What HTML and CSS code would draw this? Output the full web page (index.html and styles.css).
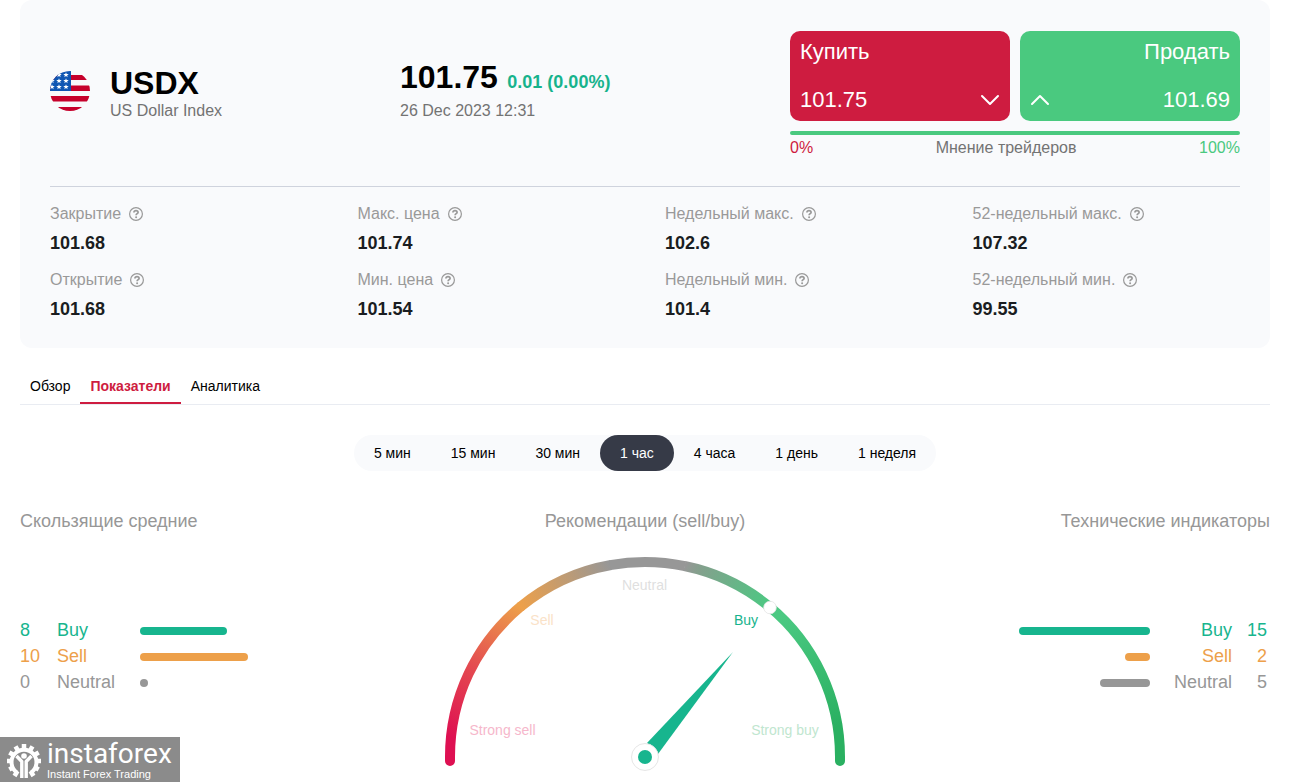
FILE: index.html
```html
<!DOCTYPE html>
<html lang="ru">
<head>
<meta charset="utf-8">
<meta name="viewport" content="width=device-width, initial-scale=1">
<title>USDX – US Dollar Index</title>
<link rel="stylesheet" href="styles.css">
</head>
<body>
<svg class="defs" width="0" height="0" aria-hidden="true">
  <symbol id="help" viewBox="0 0 14 14">
    <circle cx="7" cy="7" r="6.4" fill="none" stroke="currentColor" stroke-width="1.2"/>
    <path d="M4.900 5.500C5 4.200 5.800 3.700 7 3.700s2.100.6 2.100 1.700C9.100 6.700 7.100 6.700 7.100 8.300" fill="none" stroke="currentColor" stroke-width="1.700"/>
    <circle cx="7.100" cy="10.200" r="1" fill="currentColor"/>
  </symbol>
</svg>
<main class="page">
  <section class="card">
    <header class="summary">
      <div class="instrument">
        <svg class="flag" viewBox="0 0 40 40" aria-hidden="true">
          <defs>
            <clipPath id="disc"><circle cx="20" cy="20" r="20"/></clipPath>
            <path id="star" d="M0-2.800.7-.9 2.700-.9 1.100.4 1.700 2.300 0 1.100-1.700 2.300-1.100.4-2.700-.9-.7-.9Z" fill="#fff"/>
          </defs>
          <g clip-path="url(#disc)">
            <path fill="#f8f8fa" d="M0 0h40v40H0z"/>
            <path fill="#c6002b" d="M0 4h40v5H0zM0 14.500h40v5.500H0zM0 25h40v5.500H0zM0 36h40v4H0z"/>
            <path fill="#0f56b3" d="M0 0h21v20H0z"/>
            <use href="#star" x="9" y="4"/><use href="#star" x="16" y="4"/>
            <use href="#star" x="2" y="10"/><use href="#star" x="9" y="10"/><use href="#star" x="16" y="10"/>
            <use href="#star" x="2" y="16"/><use href="#star" x="9" y="16"/><use href="#star" x="16" y="16"/>
          </g>
        </svg>
        <div>
          <h1 class="ticker">USDX</h1>
          <p class="note">US Dollar Index</p>
        </div>
      </div>
      <div class="quote">
        <p class="price-line"><span class="price">101.75</span> <span class="change">0.01 (0.00%)</span></p>
        <p class="note">26 Dec 2023 12:31</p>
      </div>
      <div class="trade">
        <div class="trade-buttons">
          <button class="deal deal-buy" type="button">
            <span class="deal-row">Купить</span>
            <span class="deal-row">101.75
              <svg class="chevron" viewBox="0 0 20 12" aria-hidden="true"><path d="M2 2l8 8 8-8"/></svg>
            </span>
          </button>
          <button class="deal deal-sell" type="button">
            <span class="deal-row">Продать</span>
            <span class="deal-row">
              <svg class="chevron" viewBox="0 0 20 12" aria-hidden="true"><path d="M2 10l8-8 8 8"/></svg>
              101.69</span>
          </button>
        </div>
        <div class="opinion-bar"></div>
        <div class="opinion"><span class="opinion-low">0%</span><span>Мнение трейдеров</span><span class="opinion-high">100%</span></div>
      </div>
    </header>
    <dl class="stats">
      <div><dt>Закрытие <svg class="help"><use href="#help"/></svg></dt><dd>101.68</dd></div>
      <div><dt>Макс. цена <svg class="help"><use href="#help"/></svg></dt><dd>101.74</dd></div>
      <div><dt>Недельный макс. <svg class="help"><use href="#help"/></svg></dt><dd>102.6</dd></div>
      <div><dt>52-недельный макс. <svg class="help"><use href="#help"/></svg></dt><dd>107.32</dd></div>
      <div><dt>Открытие <svg class="help"><use href="#help"/></svg></dt><dd>101.68</dd></div>
      <div><dt>Мин. цена <svg class="help"><use href="#help"/></svg></dt><dd>101.54</dd></div>
      <div><dt>Недельный мин. <svg class="help"><use href="#help"/></svg></dt><dd>101.4</dd></div>
      <div><dt>52-недельный мин. <svg class="help"><use href="#help"/></svg></dt><dd>99.55</dd></div>
    </dl>
  </section>

  <nav class="tabs">
    <a class="tab" href="#overview">Обзор</a>
    <a class="tab tab-active" href="#indicators">Показатели</a>
    <a class="tab" href="#analytics">Аналитика</a>
  </nav>

  <div class="periods">
    <button class="period" type="button">5 мин</button>
    <button class="period" type="button">15 мин</button>
    <button class="period" type="button">30 мин</button>
    <button class="period period-active" type="button">1 час</button>
    <button class="period" type="button">4 часа</button>
    <button class="period" type="button">1 день</button>
    <button class="period" type="button">1 неделя</button>
  </div>

  <section class="signals" id="indicators">
    <div>
      <h2 class="heading">Скользящие средние</h2>
      <ul class="tally">
        <li class="tally-row buy"><span>8</span><span>Buy</span><span class="bar" style="width:87px"></span></li>
        <li class="tally-row sell"><span>10</span><span>Sell</span><span class="bar" style="width:108px"></span></li>
        <li class="tally-row neutral"><span>0</span><span>Neutral</span><span class="bar" style="width:8px"></span></li>
      </ul>
    </div>
    <div class="recommendation">
      <h2 class="heading">Рекомендации (sell/buy)</h2>
      <svg class="gauge" viewBox="0 0 400 216" role="img" aria-label="Buy">
        <defs>
          <linearGradient id="g1" gradientUnits="userSpaceOnUse" x1="5" y1="180" x2="76" y2="50">
            <stop offset="0" stop-color="#de1052"/><stop offset=".5" stop-color="#e44c50"/><stop offset="1" stop-color="#eda04a"/>
          </linearGradient>
          <linearGradient id="g2" gradientUnits="userSpaceOnUse" x1="76" y1="50" x2="165" y2="8">
            <stop offset="0" stop-color="#eda04a"/><stop offset="1" stop-color="#979797"/>
          </linearGradient>
          <linearGradient id="g3" gradientUnits="userSpaceOnUse" x1="240" y1="9" x2="325" y2="50">
            <stop offset="0" stop-color="#979797"/><stop offset=".15" stop-color="#84a08d"/><stop offset="1" stop-color="#4bc982"/>
          </linearGradient>
          <linearGradient id="g4" gradientUnits="userSpaceOnUse" x1="335" y1="60" x2="392" y2="170">
            <stop offset="0" stop-color="#4bc982"/><stop offset="1" stop-color="#2ab061"/>
          </linearGradient>
        </defs>
        <g fill="none" stroke-width="10">
          <path stroke="url(#g1)" stroke-linecap="round" d="M5 204V200A195 195 0 0 1 75.600 49.700"/>
          <path stroke="url(#g4)" stroke-linecap="round" d="M324.400 49.700A195 195 0 0 1 395 200V204"/>
          <path stroke="url(#g2)" d="M75 50.200A195 195 0 0 1 166 8"/>
          <path stroke="#979797" d="M165 8.200A195 195 0 0 1 240 9.200"/>
          <path stroke="url(#g3)" d="M239.500 9A195 195 0 0 1 325 50.200"/>
        </g>
        <g class="gauge-label" text-anchor="middle">
          <text x="199.500" y="33" fill="#dfdfdf">Neutral</text>
          <text x="97" y="68" fill="#fae2c8">Sell</text>
          <text x="301" y="68" fill="#17b38c">Buy</text>
          <text x="57.500" y="178" fill="#f6b7cb">Strong sell</text>
          <text x="340" y="178" fill="#bfe6cf">Strong buy</text>
        </g>
        <circle cx="325" cy="50.500" r="6.300" fill="#fff" stroke="#e4e4e4" stroke-width=".8"/>
        <path d="M288 95L202 186 213 197Z" fill="#17b58e"/>
        <circle cx="200" cy="200" r="13.500" fill="#fff" stroke="#e6e6e6"/>
        <circle cx="200" cy="200" r="7" fill="#17b58e"/>
      </svg>
    </div>
    <div class="technical">
      <h2 class="heading">Технические индикаторы</h2>
      <ul class="tally">
        <li class="tally-row buy"><span class="bar" style="width:131px"></span><span>Buy</span><span>15</span></li>
        <li class="tally-row sell"><span class="bar" style="width:25px"></span><span>Sell</span><span>2</span></li>
        <li class="tally-row neutral"><span class="bar" style="width:50px"></span><span>Neutral</span><span>5</span></li>
      </ul>
    </div>
  </section>
</main>

<aside class="brand">
  <svg class="brand-mark" viewBox="0 0 36 36" aria-hidden="true">
    <g fill="none" stroke="#fff">
      <path stroke-width="4" d="M11 29.600A12.500 12.500 0 1 1 25 29.600"/>
      <path stroke-width="4.500" d="M18 1v5M9.500 3.300l2.500 4.300M26.500 3.300l-2.500 4.300M3.300 9.500l4.300 2.500M32.700 9.500l-4.300 2.500M1 18h5M35 18h-5M3.300 26.500l4.300-2.500M32.700 26.500l-4.300-2.500M8.500 33l3-5M27.500 33l-3-5"/>
      <path stroke-width="3.400" stroke-linejoin="round" d="M10.500 13l5.300 5.500V35M25.500 13l-5.300 5.500V35"/>
    </g>
    <circle cx="18" cy="13" r="2.800" fill="#fff"/>
  </svg>
  <div>
    <p class="brand-name">instaforex</p>
    <p class="brand-line">Instant Forex Trading</p>
  </div>
</aside>
</body>
</html>
```
FILE: styles.css
```css
* { box-sizing: border-box; }

body {
  margin: 0;
  background: #fff;
  color: #000;
  font: 16px/20px "Liberation Sans", Arial, sans-serif;
}

h1, h2, p, ul, dl, dd { margin: 0; padding: 0; }
ul { list-style: none; }
button { border: 0; font: inherit; cursor: pointer; }
.defs { position: absolute; }

.page { padding: 0 20px; }

.card {
  padding: 31px 30px 29px;
  border-radius: 12px;
  background: #f9fafc;
}

.summary {
  display: grid;
  grid-template-columns: 350px 1fr 450px;
  padding-bottom: 28px;
  border-bottom: 1px solid #cfd3dd;
}

.instrument {
  display: flex;
  align-items: flex-start;
  gap: 20px;
  padding-top: 34px;
}
.flag { width: 40px; height: 40px; margin-top: 6px; }
.ticker { font-size: 32px; line-height: 36px; }
.note { color: #737373; }

.quote { padding-top: 28px; }
.price-line { height: 42px; font-weight: bold; line-height: 36px; }
.price { font-size: 32px; }
.change { margin-left: 5px; color: #17b38c; font-size: 18px; }

.trade-buttons { display: grid; grid-template-columns: 1fr 1fr; gap: 10px; }
.deal {
  display: flex;
  flex-direction: column;
  justify-content: space-between;
  height: 90px;
  padding: 8px 10px;
  border-radius: 10px;
  color: #fff;
  font-size: 22px;
  line-height: 26px;
}
.deal-buy { background: #ce1c40; }
.deal-sell { align-items: flex-end; background: #4ac97f; }
.deal-row { display: flex; align-items: center; }
.deal-row:last-child { justify-content: space-between; width: 100%; }
.chevron {
  width: 20px;
  height: 12px;
  fill: none;
  stroke: #fff;
  stroke-width: 2;
  stroke-linecap: round;
  stroke-linejoin: round;
}
.opinion-bar { height: 4px; margin: 10px 0 3px; border-radius: 2px; background: #4ac97f; }
.opinion { display: flex; justify-content: space-between; color: #737373; }
.opinion-low { color: #ce1c40; }
.opinion-high { color: #4ac97f; }

.stats {
  display: grid;
  grid-template-columns: repeat(4, 1fr);
  gap: 17px 40px;
  padding-top: 17px;
}
.stats dt { display: flex; align-items: center; gap: 8px; color: #999; white-space: nowrap; }
.stats dd { padding-top: 9px; color: #1a1d21; font-size: 18px; font-weight: bold; }
.help { width: 14px; height: 14px; overflow: visible; }

.tabs { display: flex; margin-top: 20px; border-bottom: 1px solid #e9ecf2; font-size: 14px; }
.tab { height: 36px; padding: 8px 10px; color: #000; text-decoration: none; }
.tab-active { border-bottom: 2px solid #ce1c40; color: #ce1c40; font-weight: bold; }

.periods {
  display: flex;
  width: fit-content;
  margin: 30px auto 0;
  border-radius: 18px;
  background: #f9fafc;
}
.period {
  padding: 8px 20px;
  border-radius: 18px;
  background: transparent;
  font-size: 14px;
  line-height: 20px;
}
.period-active { background: #363a47; color: #fff; }

.signals { display: grid; grid-template-columns: 1fr 400px 1fr; margin-top: 40px; }
.heading { color: #979797; font-size: 18px; font-weight: normal; }
.recommendation { text-align: center; }
.technical { text-align: right; }

.tally { padding-top: 86px; font-size: 18px; line-height: 26px; }
.tally-row { display: grid; grid-template-columns: 37px 83px 1fr; align-items: center; }
.technical .tally { padding-right: 3px; }
.technical .tally-row { grid-template-columns: 1fr 82px 35px; }
.technical .bar { justify-self: end; }
.bar { height: 8px; margin-top: 2px; border-radius: 4px; background: currentColor; }
.buy { color: #17b58e; }
.sell { color: #eda04a; }
.neutral { color: #979797; }

.gauge { display: block; width: 100%; margin-top: 26px; }
.gauge-label { font-size: 14px; }

.brand {
  position: fixed;
  bottom: 0;
  left: 0;
  display: flex;
  align-items: center;
  gap: 5px;
  width: 180px;
  height: 45px;
  padding: 2px 0 0 6px;
  background: #8b8b8b;
  color: #fff;
}
.brand-mark { width: 36px; height: 36px; }
.brand-name { font: 28px/28px Roboto, sans-serif; }
.brand-line { font-size: 11px; line-height: 13px; }
```
